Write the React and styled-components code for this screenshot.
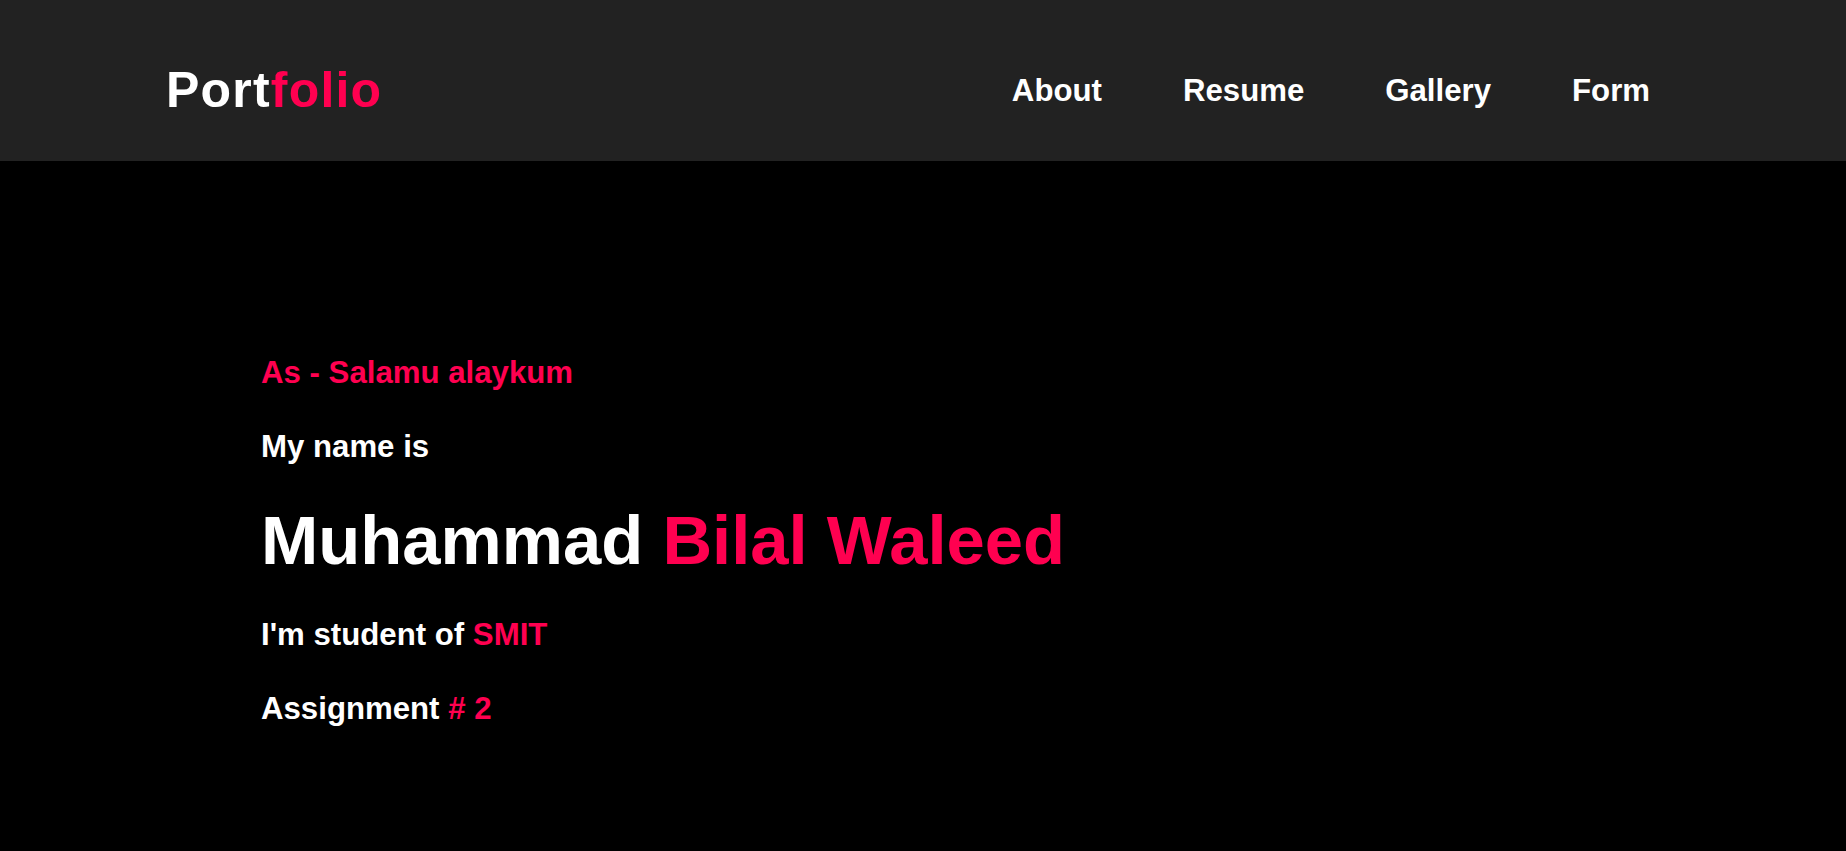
import React from "react";
import styled, { createGlobalStyle } from "styled-components";

const GlobalStyle = createGlobalStyle`
  * {
    box-sizing: border-box;
  }
  body {
    margin: 0;
    background: #000;
    font-family: "Liberation Sans", Arial, sans-serif;
    font-weight: bold;
  }
`;

const accent = "#ff0050";

function App() {
  return (
    <>
      <GlobalStyle />
      <Header>
        <Logo>
          Port<Pink>folio</Pink>
        </Logo>
        <Nav>
          <NavLink href="#about">About</NavLink>
          <NavLink href="#resume">Resume</NavLink>
          <NavLink href="#gallery">Gallery</NavLink>
          <NavLink href="#form">Form</NavLink>
        </Nav>
      </Header>

      <Hero>
        <Line pink>As - Salamu alaykum</Line>
        <Line>My name is</Line>
        <Name>
          Muhammad <Pink>Bilal Waleed</Pink>
        </Name>
        <Line>
          I'm student of <Pink>SMIT</Pink>
        </Line>
        <Line>
          Assignment <Pink># 2</Pink>
        </Line>
      </Hero>
    </>
  );
}

const Header = styled.header`
  height: 161px;
  background: #222222;
  display: flex;
  align-items: center;
  justify-content: space-between;
  padding: 21px 196px 0 166px;
`;

const Logo = styled.div`
  color: #fff;
  font-size: 50px;
  line-height: 1.15;
  letter-spacing: 1.2px;
  cursor: pointer;
`;

const Pink = styled.span`
  color: ${accent};
`;

const Nav = styled.nav`
  display: flex;
  gap: 81px;
`;

const NavLink = styled.a`
  color: #fff;
  text-decoration: none;
  font-size: 31.2px;
  line-height: 36px;
`;

const Hero = styled.main`
  display: flex;
  flex-direction: column;
  gap: 38px;
  padding: 194px 0 120px 261px;
`;

const Line = styled.p`
  margin: 0;
  font-size: 31.2px;
  line-height: 36px;
  color: ${(p) => (p.pink ? accent : "#fff")};
`;

const Name = styled.h1`
  margin: 0;
  font-size: 68.8px;
  line-height: 76px;
  color: #fff;
`;

export default App;
